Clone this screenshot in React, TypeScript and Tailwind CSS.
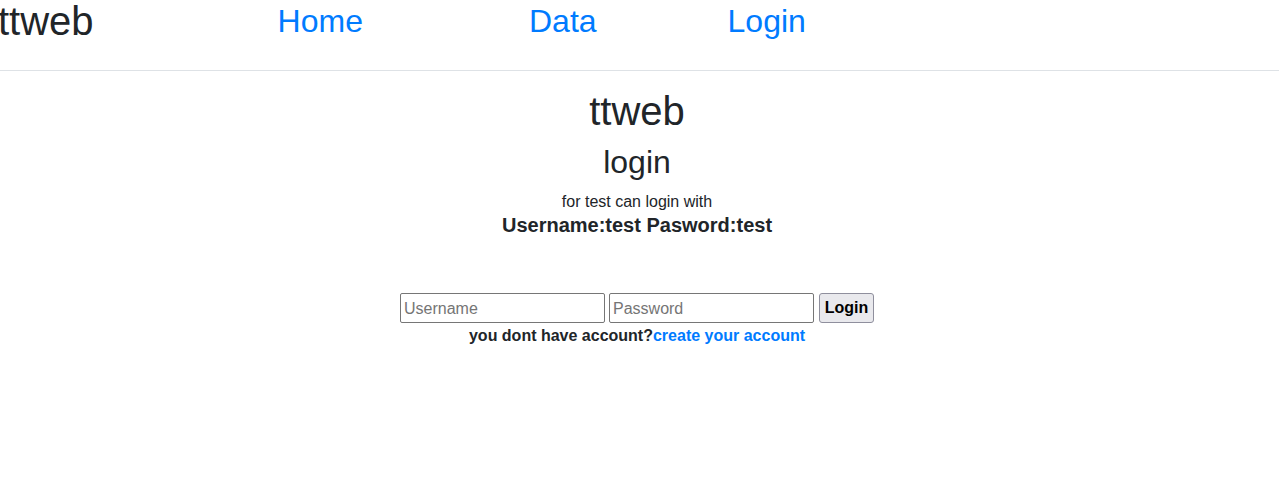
import React from "react";

export default function App() {
  return (
    <div className="min-h-[495px] w-full bg-white text-[#212529] font-['Liberation_Sans',Arial,sans-serif]">
      <header className="box-border flex h-[71px] items-start border-b border-[#dee2e6]">
        <div className="ml-[-2px] mt-[1px] text-[40px] leading-[40px]">ttweb</div>
        <a className="ml-[184px] mt-[5px] text-[32px] leading-[32px] text-[#007bff]" href="#">
          Home
        </a>
        <a className="ml-[166px] mt-[5px] text-[32px] leading-[32px] text-[#007bff]" href="#">
          Data
        </a>
        <a className="ml-[131px] mt-[5px] text-[32px] leading-[32px] text-[#007bff]" href="#">
          Login
        </a>
      </header>
      <main className="flex flex-col items-center pr-[5px] text-center">
        <h1 className="mt-4 mb-2 text-[40px] leading-[48px] font-normal">ttweb</h1>
        <h2 className="mb-2 text-[32px] leading-[38.4px] font-normal">login</h2>
        <p className="pt-[1px] text-[16px] leading-[24px]">for test can login with</p>
        <h5 className="mt-[-1px] text-[20px] leading-[24px] font-bold">Username:test Pasword:test</h5>
        <form className="mt-[56px] flex items-center gap-[4px]" onSubmit={(e) => e.preventDefault()}>
          <input
            className="box-border h-[30px] w-[205px] rounded-[2px] border border-[#767676] px-[3px] pt-[1px] text-[16px] placeholder:text-[#757575] outline-none"
            placeholder="Username"
          />
          <input
            type="password"
            className="box-border h-[30px] w-[205px] rounded-[2px] border border-[#767676] px-[3px] pt-[1px] text-[16px] placeholder:text-[#757575] outline-none"
            placeholder="Password"
          />
          <button
            type="submit"
            className="ml-[1px] box-border h-[30px] w-[55px] rounded-[3px] border border-[#8f8f9d] bg-[#e9e9ed] text-[16px] font-bold text-black"
          >
            Login
          </button>
        </form>
        <p className="mt-[3px] text-[16px] leading-[20px] font-bold">
          you dont have account?
          <a className="text-[#007bff]" href="#">
            create your account
          </a>
        </p>
      </main>
    </div>
  );
}
